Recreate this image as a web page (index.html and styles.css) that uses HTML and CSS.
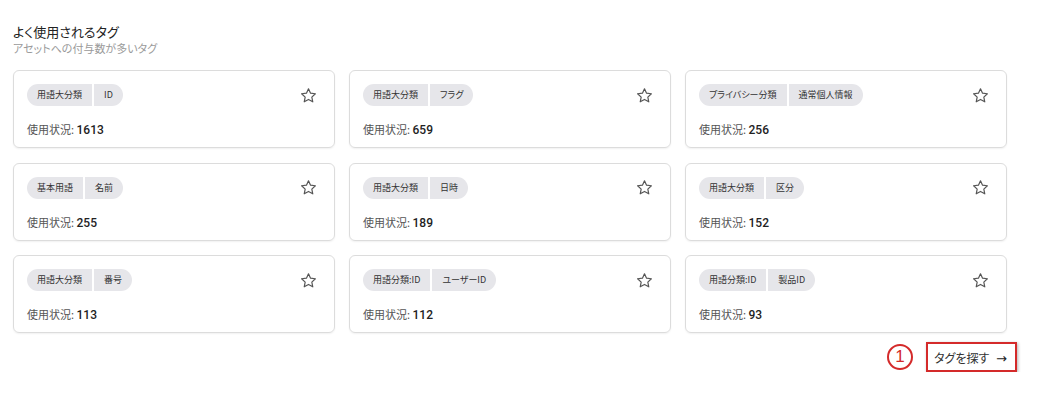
FILE: index.html
```html
<!DOCTYPE html>
<html>

<head>
    <link rel="stylesheet" href="styles.css">
</head>

<body>
    <div class="section">
        <div class="section-head">
            <div class="title">よく使用されるタグ</div>
            <div class="subtitle">アセットへの付与数が多いタグ</div>
        </div>

        <div class="tag-grid">
            <div class="tag-card">
                <div class="card-top">
                    <div class="chips"><span class="chip">用語大分類</span><span class="chip">ID</span></div>
                    <svg class="star" viewBox="0 0 24 24"><path d="M12 3.5l2.6 5.6 6.1.7-4.5 4.2 1.2 6-5.4-3-5.4 3 1.2-6-4.5-4.2 6.1-.7z"/></svg>
                </div>
                <div class="usage">使用状況: <span class="count">1613</span></div>
            </div>
            <div class="tag-card">
                <div class="card-top">
                    <div class="chips"><span class="chip">用語大分類</span><span class="chip">フラグ</span></div>
                    <svg class="star" viewBox="0 0 24 24"><path d="M12 3.5l2.6 5.6 6.1.7-4.5 4.2 1.2 6-5.4-3-5.4 3 1.2-6-4.5-4.2 6.1-.7z"/></svg>
                </div>
                <div class="usage">使用状況: <span class="count">659</span></div>
            </div>
            <div class="tag-card">
                <div class="card-top">
                    <div class="chips"><span class="chip">プライバシー分類</span><span class="chip">通常個人情報</span></div>
                    <svg class="star" viewBox="0 0 24 24"><path d="M12 3.5l2.6 5.6 6.1.7-4.5 4.2 1.2 6-5.4-3-5.4 3 1.2-6-4.5-4.2 6.1-.7z"/></svg>
                </div>
                <div class="usage">使用状況: <span class="count">256</span></div>
            </div>
            <div class="tag-card">
                <div class="card-top">
                    <div class="chips"><span class="chip">基本用語</span><span class="chip">名前</span></div>
                    <svg class="star" viewBox="0 0 24 24"><path d="M12 3.5l2.6 5.6 6.1.7-4.5 4.2 1.2 6-5.4-3-5.4 3 1.2-6-4.5-4.2 6.1-.7z"/></svg>
                </div>
                <div class="usage">使用状況: <span class="count">255</span></div>
            </div>
            <div class="tag-card">
                <div class="card-top">
                    <div class="chips"><span class="chip">用語大分類</span><span class="chip">日時</span></div>
                    <svg class="star" viewBox="0 0 24 24"><path d="M12 3.5l2.6 5.6 6.1.7-4.5 4.2 1.2 6-5.4-3-5.4 3 1.2-6-4.5-4.2 6.1-.7z"/></svg>
                </div>
                <div class="usage">使用状況: <span class="count">189</span></div>
            </div>
            <div class="tag-card">
                <div class="card-top">
                    <div class="chips"><span class="chip">用語大分類</span><span class="chip">区分</span></div>
                    <svg class="star" viewBox="0 0 24 24"><path d="M12 3.5l2.6 5.6 6.1.7-4.5 4.2 1.2 6-5.4-3-5.4 3 1.2-6-4.5-4.2 6.1-.7z"/></svg>
                </div>
                <div class="usage">使用状況: <span class="count">152</span></div>
            </div>
            <div class="tag-card">
                <div class="card-top">
                    <div class="chips"><span class="chip">用語大分類</span><span class="chip">番号</span></div>
                    <svg class="star" viewBox="0 0 24 24"><path d="M12 3.5l2.6 5.6 6.1.7-4.5 4.2 1.2 6-5.4-3-5.4 3 1.2-6-4.5-4.2 6.1-.7z"/></svg>
                </div>
                <div class="usage">使用状況: <span class="count">113</span></div>
            </div>
            <div class="tag-card">
                <div class="card-top">
                    <div class="chips"><span class="chip">用語分類:ID</span><span class="chip">ユーザーID</span></div>
                    <svg class="star" viewBox="0 0 24 24"><path d="M12 3.5l2.6 5.6 6.1.7-4.5 4.2 1.2 6-5.4-3-5.4 3 1.2-6-4.5-4.2 6.1-.7z"/></svg>
                </div>
                <div class="usage">使用状況: <span class="count">112</span></div>
            </div>
            <div class="tag-card">
                <div class="card-top">
                    <div class="chips"><span class="chip">用語分類:ID</span><span class="chip">製品ID</span></div>
                    <svg class="star" viewBox="0 0 24 24"><path d="M12 3.5l2.6 5.6 6.1.7-4.5 4.2 1.2 6-5.4-3-5.4 3 1.2-6-4.5-4.2 6.1-.7z"/></svg>
                </div>
                <div class="usage">使用状況: <span class="count">93</span></div>
            </div>
        </div>

        <div class="footer">
            <span class="step">1</span>
            <button class="find-btn">タグを探す <span class="arrow">→</span></button>
        </div>
    </div>
</body>

</html>
```

FILE: styles.css
```css
body {
    margin: 0;
    padding: 0;
    background: #ffffff;
    color: #222;
    font-family: "Noto Sans CJK JP", "Noto Sans", sans-serif;
}

.section {
    padding: 23px 0 0 13px;
    width: 1004px;
}

.title {
    font-size: 13px;
    line-height: 17px;
    color: #222;
    font-feature-settings: "palt";
}

.subtitle {
    font-size: 11px;
    line-height: 15px;
    color: #9a9a9a;
    margin-top: 1px;
    font-feature-settings: "palt";
}

.tag-grid {
    margin-top: 14px;
    display: grid;
    grid-template-columns: repeat(3, 322px);
    grid-auto-rows: 78px;
    column-gap: 14px;
    row-gap: 14.5px;
}

.tag-card {
    box-sizing: border-box;
    border: 1px solid #dcdcdc;
    border-radius: 6px;
    box-shadow: 0 1px 2px rgba(0, 0, 0, 0.06);
    padding: 13px 16px 0 13px;
    display: flex;
    flex-direction: column;
}

.card-top {
    display: flex;
    align-items: center;
    justify-content: space-between;
}

.chips {
    display: flex;
    gap: 2px;
}

.chip {
    background: #e6e6ea;
    font-size: 9px;
    line-height: 22px;
    height: 22px;
    padding: 0 10px;
    color: #333;
    font-feature-settings: "palt";
}

.chip:first-child {
    border-radius: 11px 0 0 11px;
}

.chip:last-child {
    border-radius: 0 11px 11px 0;
}

.star {
    width: 19px;
    height: 19px;
    fill: none;
    stroke: #555;
    stroke-width: 1.5;
    stroke-linejoin: round;
}

.usage {
    margin-top: 15px;
    font-size: 11px;
    line-height: 16px;
    color: #555;
}

.count {
    color: #222;
    font-family: Roboto, sans-serif;
    font-weight: 500;
    font-size: 12px;
}

.footer {
    margin-top: 9px;
    width: 1004px;
    display: flex;
    justify-content: flex-end;
    align-items: center;
    gap: 13px;
}

.step {
    box-sizing: border-box;
    width: 26px;
    height: 26px;
    border: 2px solid #d42a2a;
    border-radius: 50%;
    color: #d42a2a;
    font-family: "Liberation Sans", sans-serif;
    font-size: 17px;
    display: flex;
    align-items: center;
    justify-content: center;
}

.find-btn {
    box-sizing: border-box;
    width: 91px;
    height: 30px;
    background: #fff;
    border: 2px solid #d42a2a;
    box-shadow: 1px 1px 3px rgba(0, 0, 0, 0.3);
    font-family: "Noto Sans CJK JP", sans-serif;
    font-size: 12px;
    color: #333;
    padding: 0 0 0 6px;
    text-align: left;
    cursor: pointer;
    font-feature-settings: "palt";
}

.arrow {
    font-family: "DejaVu Sans", sans-serif;
    font-size: 13px;
    margin-left: 4px;
    color: #222;
}
```
